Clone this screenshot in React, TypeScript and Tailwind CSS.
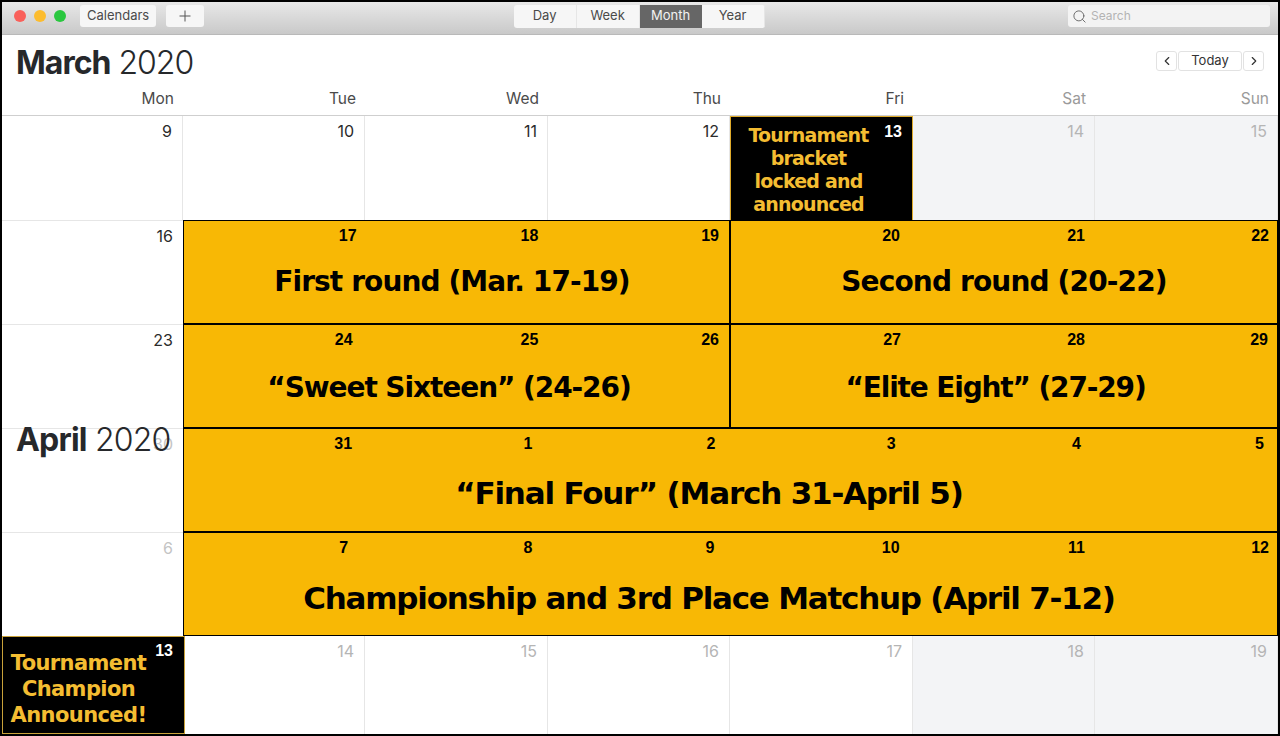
import { ChevronLeft, ChevronRight, Search } from "lucide-react";

const weekdays = [
  { label: "Mon", muted: false },
  { label: "Tue", muted: false },
  { label: "Wed", muted: false },
  { label: "Thu", muted: false },
  { label: "Fri", muted: false },
  { label: "Sat", muted: true },
  { label: "Sun", muted: true },
];

const views = ["Day", "Week", "Month", "Year"];

function DayCell({ day, muted, weekend }: { day: string; muted?: boolean; weekend?: boolean }) {
  return (
    <div
      className={`border-r border-[#e6e6e6] pt-[5px] pr-[10px] text-right text-[16px] leading-5 ${
        weekend ? "bg-[#f3f4f6]" : "bg-white"
      } ${muted ? "text-[#b5b5b5]" : "text-[#2b2b2b]"}`}
    >
      {day}
    </div>
  );
}

function SideCell({ day, muted }: { day: string; muted?: boolean }) {
  return (
    <div
      className={`border-t border-[#e6e6e6] bg-white pt-[5px] pr-[10px] text-right text-[16px] leading-5 ${
        muted ? "text-[#c4c4c4]" : "text-[#2b2b2b]"
      }`}
    >
      {day}
    </div>
  );
}

function EventBlock({
  days,
  title,
  className,
  daysClass,
  titleClass,
}: {
  days: { n: string; pr: string }[];
  title: string;
  className: string;
  daysClass: string;
  titleClass: string;
}) {
  return (
    <div className={`flex flex-col border-[1px] border-black bg-[#f8b805] ${className}`}>
      <div className={`grid h-[25px] items-end ${daysClass}`}>
        {days.map((d) => (
          <div
            key={d.n}
            className={`text-right font-['Liberation_Sans'] text-[16px] leading-5 font-bold text-black ${d.pr}`}
          >
            {d.n}
          </div>
        ))}
      </div>
      <div
        className={`flex flex-1 items-start justify-center font-['DejaVu_Sans'] leading-[40px] font-bold text-black ${titleClass}`}
      >
        {title}
      </div>
    </div>
  );
}

export default function App() {
  return (
    <div className="relative flex h-[736px] w-[1280px] flex-col overflow-hidden border-x-2 border-t-2 border-b-2 border-black bg-white font-['Inter',sans-serif]">
      {/* Toolbar */}
      <div className="relative flex h-[33px] shrink-0 items-center justify-between border-b border-[#b9b9b9] bg-gradient-to-b from-[#e8e8e8] to-[#c9c9c9] pr-[8px] pb-[4px] pl-[12px]">
        <div className="flex items-center">
          <span className="h-[12px] w-[12px] rounded-full bg-[#f9605a]" />
          <span className="ml-[8px] h-[12px] w-[12px] rounded-full bg-[#fcbc2e]" />
          <span className="ml-[8px] h-[12px] w-[12px] rounded-full bg-[#2ac73f]" />
          <div className="ml-[14px] flex h-[22px] items-center rounded-[3px] bg-[#f6f6f6] px-[7px] text-[13px] text-[#4a4a4a]">
            Calendars
          </div>
          <div className="ml-[10px] flex h-[22px] w-[38px] items-center justify-center rounded-[3px] bg-[#f6f6f6]">
            <svg width="12" height="12" viewBox="0 0 12 12" className="stroke-[#555555]">
              <path d="M6 0.5V11.5M0.5 6H11.5" strokeWidth="1" />
            </svg>
          </div>
        </div>
        <div className="ml-[6px] flex h-[23px] overflow-hidden rounded-[3px] bg-[#f6f6f6] text-[13px] text-[#4a4a4a]">
          {views.map((v) => (
            <div
              key={v}
              className={`flex items-center justify-center ${
                v === "Month" ? "w-[62px] bg-[#666666] text-[#f2f2f2]" : "w-[63px] border-r border-[#e6e6e6]"
              }`}
            >
              {v}
            </div>
          ))}
        </div>
        <div className="flex h-[22px] w-[202px] items-center rounded-[3px] bg-[#f3f3f3] pl-[4px] text-[12px] text-[#b3b3b3]">
          <Search size={15} strokeWidth={1.5} className="text-[#666666]" />
          <span className="ml-[4px]">Search</span>
        </div>
      </div>

      {/* Month header */}
      <div className="relative h-[80px] shrink-0 bg-white">
        <div className="flex items-start justify-between pt-[9px] pr-[12px] pl-[14px]">
          <h1 className="text-[32px] leading-[38px] tracking-[-1px] text-[#26282b]">
            <span className="font-bold">March</span> <span className="font-light">2020</span>
          </h1>
          <div className="mt-[7px] mr-[2px] flex items-center gap-[1px] text-[13px] text-[#333333]">
            <div className="flex h-[20px] w-[21px] items-center justify-center rounded-[3px] border border-[#e2e2e2]">
              <ChevronLeft size={14} strokeWidth={2} />
            </div>
            <div className="flex h-[20px] w-[64px] items-center justify-center rounded-[3px] border border-[#e2e2e2]">
              Today
            </div>
            <div className="flex h-[20px] w-[21px] items-center justify-center rounded-[3px] border border-[#e2e2e2]">
              <ChevronRight size={14} strokeWidth={2} />
            </div>
          </div>
        </div>
        <div className="absolute right-0 bottom-[6px] left-0 grid grid-cols-[181px_182px_183px_182px_183px_182px_183px] text-[15.5px] leading-5">
          {weekdays.map((w) => (
            <div key={w.label} className={`pr-[9px] text-right ${w.muted ? "text-[#9a9a9a]" : "text-[#4a4a4a]"}`}>
              {w.label}
            </div>
          ))}
        </div>
      </div>

      {/* Month grid */}
      <div className="grid flex-1 grid-cols-[181px_182px_183px_182px_183px_182px_183px] grid-rows-[104px_104px_104px_104px_104px_1fr] border-t border-[#cfcfcf]">
        <DayCell day="9" />
        <DayCell day="10" />
        <DayCell day="11" />
        <DayCell day="12" />
        <div className="relative border-x border-t border-[#e0ac2c] bg-black pt-[7px] text-center font-['DejaVu_Sans'] text-[19px] leading-[23px] font-bold tracking-[-0.8px] text-[#f4bd32]">
          <span className="absolute top-[5px] right-[10px] font-['Liberation_Sans'] text-[16px] leading-5 tracking-normal text-white">
            13
          </span>
          <div className="pr-[26px]">
            Tournament
            <br />
            bracket
            <br />
            locked and
            <br />
            announced
          </div>
        </div>
        <DayCell day="14" muted weekend />
        <DayCell day="15" muted weekend />

        <SideCell day="16" />
        <EventBlock
          className="col-span-3"
          daysClass="grid-cols-3"
          titleClass="pt-[16px] pr-[9px] text-[28px] tracking-[-0.9px]"
          title="First round (Mar. 17-19)"
          days={[
            { n: "17", pr: "pr-[9px]" },
            { n: "18", pr: "pr-[9px]" },
            { n: "19", pr: "pr-[10px]" },
          ]}
        />
        <EventBlock
          className="col-span-3"
          daysClass="grid-cols-3"
          titleClass="pt-[16px] text-[28px] tracking-[-0.85px]"
          title="Second round (20-22)"
          days={[
            { n: "20", pr: "pr-[13px]" },
            { n: "21", pr: "pr-[10px]" },
            { n: "22", pr: "pr-[8px]" },
          ]}
        />

        <SideCell day="23" />
        <EventBlock
          className="col-span-3"
          daysClass="grid-cols-3"
          titleClass="pt-[18px] pr-[15px] text-[28px] tracking-[-1.07px]"
          title="“Sweet Sixteen” (24-26)"
          days={[
            { n: "24", pr: "pr-[13px]" },
            { n: "25", pr: "pr-[9px]" },
            { n: "26", pr: "pr-[10px]" },
          ]}
        />
        <EventBlock
          className="col-span-3"
          daysClass="grid-cols-3"
          titleClass="pt-[18px] pr-[17px] text-[28px] tracking-[-1.15px]"
          title="“Elite Eight” (27-29)"
          days={[
            { n: "27", pr: "pr-[12px]" },
            { n: "28", pr: "pr-[10px]" },
            { n: "29", pr: "pr-[9px]" },
          ]}
        />

        <SideCell day="30" muted />
        <EventBlock
          className="col-span-6"
          daysClass="grid-cols-6"
          titleClass="pt-[19px] pr-[43px] text-[31px] tracking-[-1.2px]"
          title="“Final Four” (March 31-April 5)"
          days={[
            { n: "31", pr: "pr-[14px]" },
            { n: "1", pr: "pr-[16px]" },
            { n: "2", pr: "pr-[15px]" },
            { n: "3", pr: "pr-[17px]" },
            { n: "4", pr: "pr-[14px]" },
            { n: "5", pr: "pr-[13px]" },
          ]}
        />

        <SideCell day="6" muted />
        <EventBlock
          className="col-span-6"
          daysClass="grid-cols-6"
          titleClass="pt-[20px] pr-[43px] text-[31px] tracking-[-1.25px]"
          title="Championship and 3rd Place Matchup (April 7-12)"
          days={[
            { n: "7", pr: "pr-[18px]" },
            { n: "8", pr: "pr-[16px]" },
            { n: "9", pr: "pr-[16px]" },
            { n: "10", pr: "pr-[13px]" },
            { n: "11", pr: "pr-[10px]" },
            { n: "12", pr: "pr-[8px]" },
          ]}
        />

        <div className="relative z-10 -mr-[2px] border border-[#c9a23a] bg-black pt-[13px] text-center font-['DejaVu_Sans'] text-[21px] leading-[26px] font-bold tracking-[-0.6px] text-[#f4bd32]">
          <span className="absolute top-[4px] right-[11px] font-['Liberation_Sans'] text-[16px] leading-5 tracking-normal text-white">
            13
          </span>
          <div className="pr-[30px]">
            Tournament
            <br />
            Champion
            <br />
            Announced!
          </div>
        </div>
        <DayCell day="14" muted />
        <DayCell day="15" muted />
        <DayCell day="16" muted />
        <DayCell day="17" muted />
        <DayCell day="18" muted weekend />
        <DayCell day="19" muted weekend />
      </div>

      {/* April title sits over the 30 cell, as the month scrolls */}
      <div className="absolute top-[419px] left-[14px] text-[32px] leading-[38px] tracking-[-0.8px] text-[#26282b]">
        <span className="font-bold">April</span> <span className="font-light">2020</span>
      </div>
    </div>
  );
}
